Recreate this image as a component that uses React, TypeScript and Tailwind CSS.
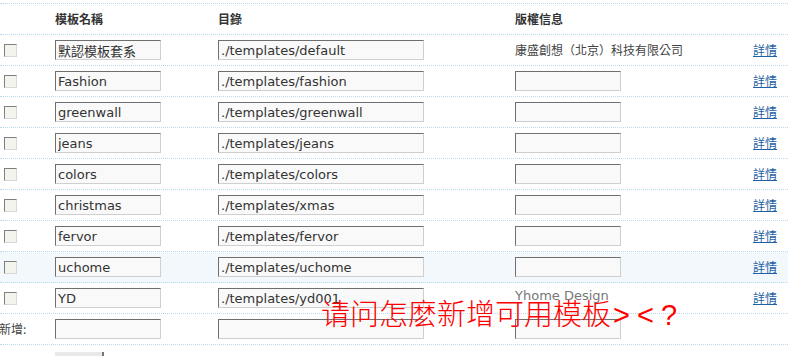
const rows = [
  { name: "默認模板套系", dir: "./templates/default", copy: "康盛創想（北京）科技有限公司" },
  { name: "Fashion", dir: "./templates/fashion" },
  { name: "greenwall", dir: "./templates/greenwall" },
  { name: "jeans", dir: "./templates/jeans" },
  { name: "colors", dir: "./templates/colors" },
  { name: "christmas", dir: "./templates/xmas" },
  { name: "fervor", dir: "./templates/fervor" },
  { name: "uchome", dir: "./templates/uchome", hover: true },
  { name: "YD", dir: "./templates/yd001", copy: "Yhome Design", light: true },
];

const rowCls =
  "grid grid-cols-[55px_163px_297px_238px_1fr] h-[31px] items-center border-b border-dotted border-[#b8daf0]";

function Field({ value, w }: { value?: string; w: string }) {
  return (
    <input
      readOnly
      value={value ?? ""}
      className={`${w} h-[20px] bg-[#f9f9f9] border border-t-[#6f6f6f] border-l-[#6f6f6f] border-r-[#cfcfcf] border-b-[#cfcfcf] px-[2px] text-[13px] text-[#333] outline-none [font-family:'DejaVu_Sans','Noto_Sans_CJK_TC',sans-serif]`}
    />
  );
}

function Check() {
  return (
    <span className="ml-[4px] block w-[13px] h-[13px] bg-[#f4f4ef] border border-t-[#808080] border-l-[#808080] border-r-[#d8d8d8] border-b-[#d8d8d8]" />
  );
}

export default function App() {
  return (
    <div className="relative w-[788px] h-[356px] overflow-hidden bg-white pt-[3px] text-[12px] text-[#444] [font-family:'DejaVu_Sans','Noto_Sans_CJK_TC',sans-serif]">
      <div className="border-t border-dotted border-[#b8daf0]">
        <div className={rowCls}>
          <span />
          <span className="font-bold text-[#333] [font-family:'Noto_Sans_CJK_TC',sans-serif]">模板名稱</span>
          <span className="font-bold text-[#333] [font-family:'Noto_Sans_CJK_TC',sans-serif]">目錄</span>
          <span className="font-bold text-[#333] [font-family:'Noto_Sans_CJK_TC',sans-serif]">版權信息</span>
          <span />
        </div>

        {rows.map((r) => (
          <div key={r.dir} className={`${rowCls} ${r.hover ? "bg-[#f2f8fc]" : ""}`}>
            <Check />
            <Field value={r.name} w="w-[106px]" />
            <Field value={r.dir} w="w-[206px]" />
            {r.copy ? (
              <span
                className={
                  r.light
                    ? "text-[13px] text-[#777] -mt-[4px]"
                    : "text-[12px] text-[#444] [font-family:'Noto_Sans_CJK_TC',sans-serif]"
                }
              >
                {r.copy}
              </span>
            ) : (
              <Field w="w-[106px]" />
            )}
            <a href="#" className="text-[#1f5fa3] underline [font-family:'Noto_Sans_CJK_TC',sans-serif]">
              詳情
            </a>
          </div>
        ))}

        <div className={rowCls}>
          <span className="-ml-[1px] text-[#444] [font-family:'Noto_Sans_CJK_TC',sans-serif]">新增:</span>
          <Field w="w-[106px]" />
          <Field w="w-[206px]" />
          <Field w="w-[106px]" />
          <span />
        </div>

        <div className="grid grid-cols-[55px_1fr] pt-[7px]">
          <span />
          <button className="w-[49px] h-[22px] bg-[#e9e9e9] border-r-2 border-[#777]" />
        </div>
      </div>

      <div className="absolute left-[321px] top-[298px] text-[29px] font-light leading-none text-[#ff0000] whitespace-nowrap [font-family:'Noto_Sans_CJK_SC',sans-serif]">
        请问怎麽新增可用模板<span className="ml-[2px] tracking-[7px] [font-family:'Liberation_Sans',sans-serif]">&gt;&lt;?</span>
      </div>
    </div>
  );
}
